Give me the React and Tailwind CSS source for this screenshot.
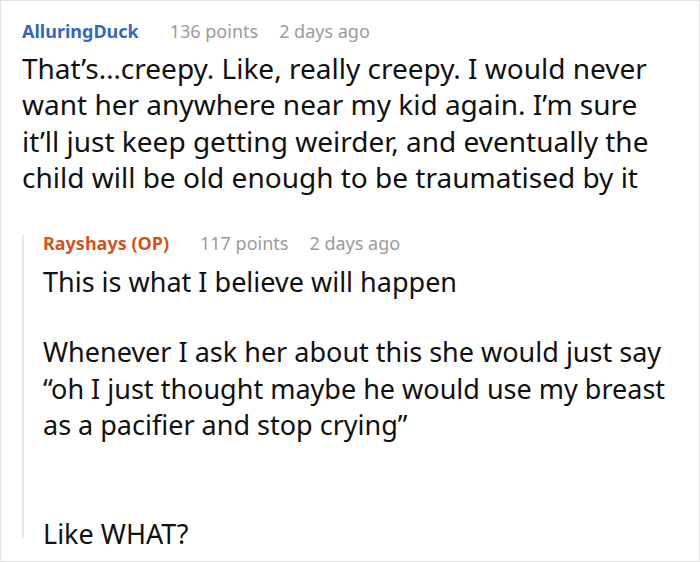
import React from "react";

const Meta = ({ name, nameClass, points, ago }) => (
  <div className="flex items-baseline text-[18px]">
    <span className={`font-bold ${nameClass}`}>{name}</span>
    <span className="ml-[31px] text-[#9b9b9b]">{points} points</span>
    <span className="ml-[21px] text-[#9b9b9b]">{ago}</span>
  </div>
);

export default function App() {
  return (
    <div
      className="w-[700px] h-[562px] overflow-hidden border border-[#e1e1e1] bg-white pl-[21px] pt-[18px] text-[#111111]"
      style={{ fontFamily: '"Noto Sans", "Open Sans", sans-serif' }}
    >
      {/* Parent comment */}
      <div className="leading-[24px]">
        <Meta
          name="AlluringDuck"
          nameClass="text-[#3668b5]"
          points={136}
          ago="2 days ago"
        />
      </div>
      <p className="mt-[7px] text-[28px] leading-[36.3px]">
        That’s…creepy. Like, really creepy. I would never
        <br />
        want her anywhere near my kid again. I’m sure
        <br />
        it’ll just keep getting weirder, and eventually the
        <br />
        child will be old enough to be traumatised by it
      </p>

      {/* Reply */}
      <div className="mt-[45px] h-[303px] border-l-2 border-[#e6e6e6] pl-[19px]">
        <div className="-mt-[5px] leading-[17px]">
          <Meta
            name="Rayshays (OP)"
            nameClass="text-[#d4531d]"
            points={117}
            ago="2 days ago"
          />
        </div>
        <div className="mt-[12px] text-[27px] leading-[36.3px]">
          <p>This is what I believe will happen</p>
          <p className="mt-[34px]">
            Whenever I ask her about this she would just say
            <br />
            “oh I just thought maybe he would use my breast
            <br />
            as a pacifier and stop crying”
          </p>
          <p className="mt-[73px]">Like WHAT?</p>
        </div>
      </div>
    </div>
  );
}
